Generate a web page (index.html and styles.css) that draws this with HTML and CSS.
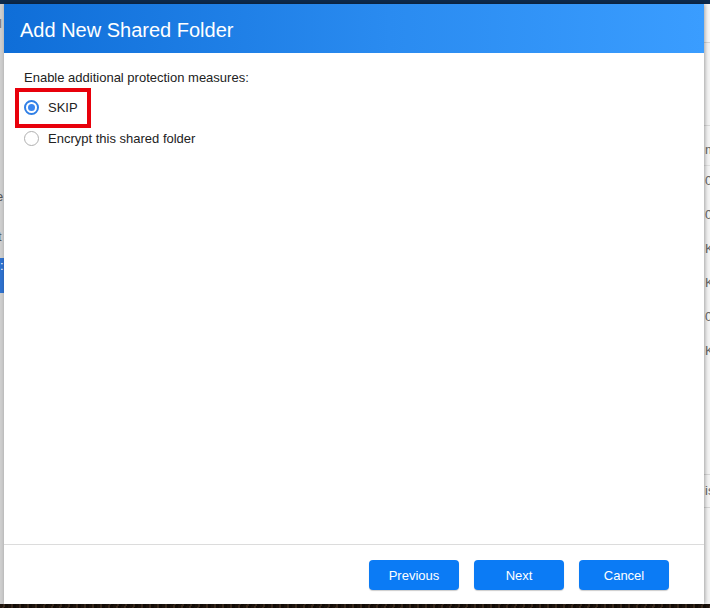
FILE: index.html
```html
<!DOCTYPE html>
<html>
<head>
<meta charset="utf-8">
<link rel="stylesheet" href="styles.css">
</head>
<body>
<div class="app">
  <div class="topbar"></div>
  <div class="main">
    <div class="left-pane">
      <div class="lp-mark">l</div>
      <div class="lp-item lp-e">e</div>
      <div class="lp-item lp-t">t</div>
      <div class="lp-active">:</div>
    </div>
    <div class="center"></div>
    <div class="right-pane">
      <div class="rp-head"></div>
      <div class="rp-head2"></div>
      <div class="rp-row first">m</div>
      <div class="rp-row">0</div>
      <div class="rp-row">0</div>
      <div class="rp-row">K</div>
      <div class="rp-row">K</div>
      <div class="rp-row">0</div>
      <div class="rp-row">K</div>
      <div class="rp-gap"></div>
      <div class="rp-row boxed">is</div>
    </div>
  </div>
  <div class="bottombar"></div>
</div>

<div class="dialog">
  <div class="dlg-title">Add New Shared Folder</div>
  <div class="dlg-body">
    <div class="prompt">Enable additional protection measures:</div>
    <div class="option highlighted">
      <span class="radio checked"></span>
      <span class="opt-label">SKIP</span>
      <span class="mark-box"></span>
    </div>
    <div class="option">
      <span class="radio"></span>
      <span class="opt-label">Encrypt this shared folder</span>
    </div>
  </div>
  <div class="dlg-footer">
    <button class="btn">Previous</button>
    <button class="btn">Next</button>
    <button class="btn">Cancel</button>
  </div>
</div>
</body>
</html>
```

FILE: styles.css
```css
* { box-sizing: border-box; }
html, body {
  margin: 0;
  padding: 0;
  width: 710px;
  height: 608px;
  overflow: hidden;
  font-family: "Liberation Sans", Arial, sans-serif;
}
body { position: relative; }

.app {
  display: flex;
  flex-direction: column;
  width: 710px;
  height: 608px;
  background: #f2f2f2;
}
.topbar {
  height: 4px;
  background: #0d2a4d;
  flex: none;
}
.main {
  flex: 1;
  display: flex;
}
.left-pane {
  width: 4px;
  background: #cfcfcf;
  position: relative;
  overflow: hidden;
  font-size: 13px;
  color: #555;
}
.lp-mark {
  position: absolute;
  top: 12px;
  left: -1px;
  color: #777;
}
.lp-item { position: absolute; left: -4px; }
.lp-e { top: 185px; }
.lp-t { top: 225px; left: -2px; }
.lp-active {
  position: absolute;
  top: 254px;
  left: 0;
  width: 4px;
  height: 35px;
  background: #2f72d0;
  color: #fff;
}
.center { flex: 1; background: #fff; }
.right-pane {
  width: 6px;
  background: #f4f4f4;
  overflow: hidden;
  white-space: nowrap;
  font-size: 13px;
  color: #666;
  display: flex;
  flex-direction: column;
}
.rp-head {
  height: 39px;
  border-bottom: 1px solid #d6d6d6;
  background: #f7f7f7;
}
.rp-head2 {
  height: 83px;
  border-bottom: 1px solid #d9d9d9;
}
.rp-row {
  height: 34px;
  line-height: 30px;
  padding-left: 1px;
  flex: none;
}
.rp-row.first {
  height: 40px;
  padding-top: 14px;
  line-height: 20px;
  border-bottom: 1px solid #e0e0e0;
}
.rp-gap { height: 104px; flex: none; }
.rp-row.boxed {
  height: 34px;
  line-height: 32px;
  border-top: 1px solid #d6d6d6;
  border-bottom: 1px solid #d6d6d6;
}
.bottombar {
  height: 4px;
  flex: none;
  background: repeating-linear-gradient(100deg, #1e140d 0 3px, #3a2a1e 3px 5px, #140d08 5px 8px);
}

.dialog {
  position: absolute;
  left: 4px;
  top: 4px;
  width: 700px;
  height: 600px;
  background: #fff;
  display: flex;
  flex-direction: column;
  box-shadow: 1px 0 4px rgba(0,0,0,0.35);
}
.dlg-title {
  height: 49px;
  flex: none;
  background: linear-gradient(to right, #0f6ed8, #2a8bf0 55%, #3a9dff);
  color: #fff;
  font-size: 20px;
  padding-left: 16px;
  line-height: 52px;
}
.dlg-body {
  flex: 1;
  padding: 17px 20px 0;
  font-size: 13px;
  color: #222;
}
.prompt {
  line-height: 16px;
  margin-bottom: 6px;
}
.option {
  display: flex;
  align-items: center;
  gap: 9px;
  height: 31px;
  position: relative;
}
.radio {
  width: 15px;
  height: 15px;
  border-radius: 50%;
  border: 1.5px solid #b0b0b0;
  background: #fff;
  display: inline-flex;
  align-items: center;
  justify-content: center;
  flex: none;
}
.radio.checked {
  border: 2px solid #2f7fe6;
}
.radio.checked::after {
  content: "";
  width: 7px;
  height: 7px;
  border-radius: 50%;
  background: #3a86ef;
}
.opt-label { line-height: 16px; }
.mark-box {
  position: absolute;
  left: -9px;
  top: -4px;
  width: 76px;
  height: 40px;
  border: 4px solid #e8000b;
}
.dlg-footer {
  flex: none;
  height: 60px;
  border-top: 1px solid #dcdcdc;
  display: flex;
  justify-content: flex-end;
  align-items: flex-start;
  gap: 15px;
  padding: 15px 35px 0 0;
}
.btn {
  width: 90px;
  height: 30px;
  border: none;
  border-radius: 4px;
  background: #0b7bf5;
  color: #fff;
  font-family: "Liberation Sans", Arial, sans-serif;
  font-size: 13px;
  padding: 0;
  box-shadow: 0 1px 1px rgba(0,0,0,0.2);
}
```
